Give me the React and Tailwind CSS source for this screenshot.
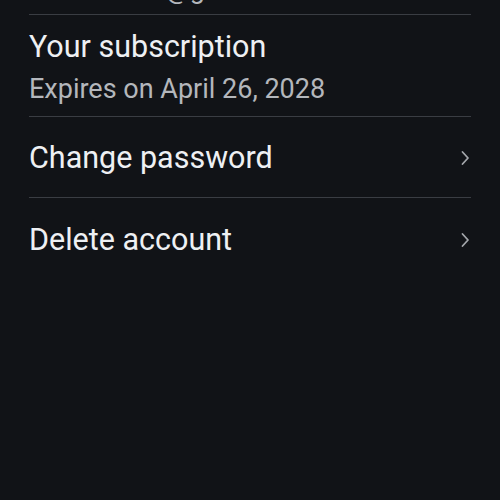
import React from 'react';

const Chevron = () => (
    <svg width="12" height="18" viewBox="0 0 12 18" fill="none" className="shrink-0">
        <path d="M3.5 3 L9 9 L3.5 15" stroke="#a3a6ab" strokeWidth="1.8" strokeLinecap="round" strokeLinejoin="round" />
    </svg>
);

const LinkRow = ({ label, last }) => (
    <div className={`flex items-center justify-between h-[81px] pt-[2px] ${last ? '' : 'border-b border-[#3a3d43]'}`}>
        <span className="text-[30.5px] text-[#eef0f3]">{label}</span>
        <Chevron />
    </div>
);

export default function App() {
    return (
        <div className="w-[500px] h-[500px] overflow-hidden bg-[#111317] font-['Roboto',sans-serif]">
            <div className="mx-[29px]">
                <div className="h-[15px] border-b border-[#3a3d43] flex items-end overflow-hidden">
                    <span className="text-[27px] leading-none text-[#b4b7bc] mb-[11px] whitespace-nowrap">alexander.k@gmail.com</span>
                </div>
                <div className="h-[102px] border-b border-[#3a3d43] flex flex-col pt-[12px]">
                    <span className="text-[30.5px] leading-[40px] text-[#eef0f3]">Your subscription</span>
                    <span className="text-[27px] leading-[45px] text-[#b4b7bc]">Expires on April 26, 2028</span>
                </div>
                <LinkRow label="Change password" />
                <LinkRow label="Delete account" last />
            </div>
        </div>
    );
}
